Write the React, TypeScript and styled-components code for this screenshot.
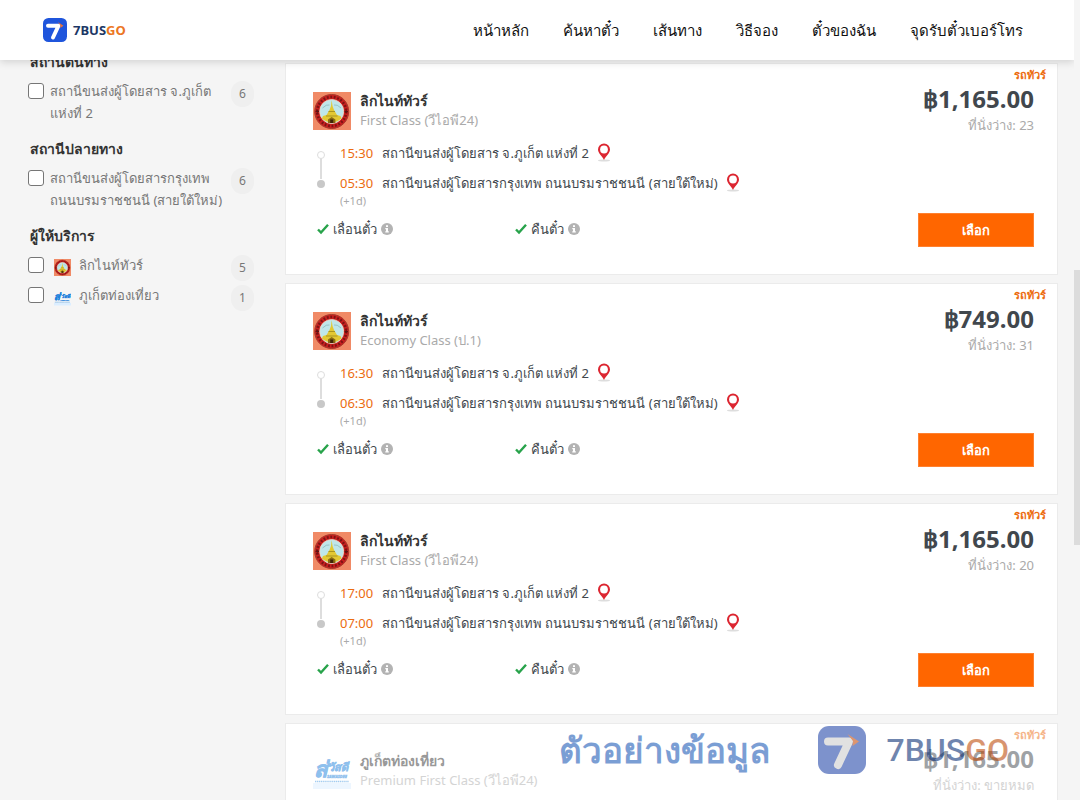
import React from "react";
import styled, { createGlobalStyle } from "styled-components";

const GlobalStyle = createGlobalStyle`
  * { box-sizing: border-box; }
  body {
    margin: 0;
    background: #f5f5f5;
    color: #41474d;
    font-family: "Noto Sans", "Liberation Sans", sans-serif;
    font-size: 13px;
  }
`;

const Page = styled.div`
  position: relative;
  height: 100vh;
  overflow: hidden;
`;

const Header = styled.header`
  position: relative;
  z-index: 2;
  display: flex;
  align-items: center;
  justify-content: space-between;
  height: 60px;
  margin-right: 6px;
  padding: 0 51px 0 43px;
  background: #fff;
  box-shadow: 0 2px 8px rgba(0, 0, 0, 0.15);
`;

const Brand = styled.a<{ $large?: boolean }>`
  display: flex;
  align-items: center;
  gap: ${(p) => (p.$large ? 20 : 6)}px;
  color: ${(p) => (p.$large ? "#002770" : "#1c3765")};
  font-family: ${(p) => (p.$large ? "Roboto" : '"Noto Sans"')}, sans-serif;
  font-size: ${(p) => (p.$large ? 32 : 13)}px;
  font-weight: ${(p) => (p.$large ? 500 : 700)};
  line-height: 1;
  text-decoration: none;
  svg {
    width: ${(p) => (p.$large ? 48 : 24)}px;
    height: ${(p) => (p.$large ? 48 : 24)}px;
  }
`;

const BrandAccent = styled.span<{ $large?: boolean }>`
  color: ${(p) => (p.$large ? "#bb4300" : "#ec7624")};
`;

const Nav = styled.nav`
  display: flex;
  gap: 34px;
`;

const NavLink = styled.a`
  color: #111;
  font-size: 15px;
  line-height: 24px;
  text-decoration: none;
  white-space: nowrap;
`;

const Body = styled.div`
  display: flex;
  align-items: flex-start;
  padding-right: 22px;
`;

const Sidebar = styled.aside`
  flex: 0 0 285px;
  padding: 0 28px;
  margin-top: -10px;
`;

const FilterGroup = styled.fieldset`
  margin: 0 0 13px;
  padding: 0;
  border: 0;
`;

const FilterTitle = styled.legend`
  margin-bottom: 6px;
  padding: 0 2px;
  color: #333;
  font-size: 14px;
  font-weight: 700;
  line-height: 24px;
`;

const FilterRow = styled.label`
  display: flex;
  align-items: flex-start;
  min-height: 30px;
  color: #777;
  line-height: 22px;
`;

const Checkbox = styled.input`
  appearance: none;
  flex: none;
  width: 16px;
  height: 16px;
  margin: 3px 6px 0 0;
  border: 1px solid #767676;
  border-radius: 3px;
  background: #fff;
`;

const FilterText = styled.span`
  flex: 1;
  white-space: nowrap;
`;

const SmallLogo = styled.span`
  flex: none;
  width: 17px;
  height: 17px;
  margin: 5px 8px 0 4px;
  svg { display: block; width: 17px; height: 17px; }
`;

const Count = styled.span`
  flex: none;
  width: 23px;
  height: 26px;
  margin: 1px 3px 0 0;
  border-radius: 12px;
  background: #efefef;
  font-size: 12px;
  line-height: 26px;
  text-align: center;
`;

const Results = styled.main`
  flex: 1;
  min-width: 0;
  display: flex;
  flex-direction: column;
  gap: 8px;
  padding-top: 3px;
`;

const Card = styled.article<{ $soldOut?: boolean }>`
  display: flex;
  justify-content: space-between;
  min-height: 212px;
  padding: 3px 11px 0 27px;
  border: 1px solid #ebebeb;
  background: #fff;
  > * { opacity: ${(p) => (p.$soldOut ? 0.5 : 1)}; }
`;

const Trip = styled.div`
  flex: 1;
  min-width: 0;
  padding-top: 25px;
`;

const Operator = styled.div`
  display: flex;
  gap: 9px;
  height: 38px;
  svg { flex: none; width: 38px; height: 38px; }
`;

const OperatorName = styled.h3`
  margin: 0;
  color: #333;
  font-size: 14px;
  font-weight: 700;
  line-height: 18px;
`;

const ServiceClass = styled.p`
  margin: 0;
  color: #aaa;
  line-height: 20px;
`;

const Stops = styled.div`
  display: flex;
  gap: 14px;
  margin-top: 12px;
`;

const Track = styled.svg`
  flex: none;
  width: 10px;
  height: 42px;
  margin: 7px 0 0 3px;
`;

const Stop = styled.div`
  display: flex;
  height: 30px;
  line-height: 22px;
  white-space: nowrap;
  svg { flex: none; margin: 1px 0 0 8px; }
`;

const Time = styled.time`
  flex: 0 0 42px;
  color: #ec6c10;
  font-size: 13px;
`;

const NextDay = styled.div`
  margin-top: -8px;
  color: #aaa;
  font-size: 11px;
  line-height: 14px;
`;

const Features = styled.div`
  display: flex;
  margin-top: 10px;
`;

const Feature = styled.div`
  display: flex;
  align-items: center;
  flex: 0 0 198px;
  gap: 4px;
  padding-left: 4px;
  line-height: 22px;
`;

const Fare = styled.div`
  display: flex;
  flex-direction: column;
  align-items: flex-end;
`;

const BusType = styled.div`
  height: 14px;
  color: #ec6c10;
  font-size: 11px;
  font-weight: 700;
  line-height: 16px;
`;

const Price = styled.div`
  margin-right: 12px;
  font-size: 24px;
  font-weight: 700;
  line-height: 36px;
`;

const Seats = styled.div`
  margin-right: 12px;
  color: #aaa;
  line-height: 16px;
`;

const SelectButton = styled.button`
  width: 116px;
  height: 34px;
  margin: 80px 12px 0 0;
  padding: 0;
  border: 1px solid #ff8130;
  background: #ff6600;
  color: #fff;
  font: 600 13px "Noto Sans", sans-serif;
  cursor: pointer;
`;

const Watermark = styled.div`
  position: absolute;
  z-index: 1;
  right: 71px;
  bottom: 26px;
  display: flex;
  align-items: center;
  gap: 48px;
  opacity: 0.56;
  pointer-events: none;
`;

const WatermarkText = styled.span`
  color: #1454b4;
  font-size: 35px;
  font-weight: 700;
  line-height: 48px;
  white-space: nowrap;
`;

const ScrollRail = styled.div`
  position: absolute;
  z-index: 3;
  inset: 0 0 0 auto;
  width: 6px;
  padding-top: 270px;
  background: #f5f5f5;
`;

const ScrollThumb = styled.div`
  height: 275px;
  background: #dcdcdc;
`;

const BrandMark = ({ muted }: { muted?: boolean }) => (
  <svg viewBox="0 0 48 48" aria-hidden="true">
    <rect width="48" height="48" rx="11" fill={muted ? "#193ea6" : "#1f55dc"} />
    <path d="M10 15.500H31L20 39" fill="none" stroke={muted ? "#cbcbcb" : "#fff"} strokeWidth="8" strokeLinecap="round" strokeLinejoin="round" />
    <path d="M29.500 8L41 15.500 34.500 20 35 15Z" fill={muted ? "#c44300" : "#ed7134"} />
  </svg>
);

const TempleLogo = () => (
  <svg viewBox="0 0 38 38" aria-hidden="true">
    <rect width="38" height="38" fill="#f08a66" />
    <circle cx="18.700" cy="19.500" r="17" fill="#c9201f" stroke="#a83a2c" />
    <circle cx="18.700" cy="19.500" r="14.500" fill="none" stroke="#7d1414" strokeWidth="2.600" strokeDasharray="1.800 1.700" />
    <circle cx="18.700" cy="19.500" r="12" fill="#bfe6ea" stroke="#efd9c4" strokeWidth=".8" />
    <path d="M9.500 16q4-4 7-3m4.500 0q3-1 7 3" fill="none" stroke="#8db9b9" strokeWidth=".8" />
    <path d="M18.700 8l.8 6 1.500 4 3 5 3.500 1 1 2.500q-9.800 8-19.600 0L10 24l3.500-1 3-5 1.500-4Z" fill="#e3c832" />
    <path d="M15.500 19.500h6.500M13 24h11.500" stroke="#a99521" />
    <path d="M15 31v-3.500l3.700-2.500 3.700 2.500V31Z" fill="#8a6c12" />
    <path d="M17.200 31v-3.500h3V31Z" fill="#3f2508" />
    <path d="M2.500 19.500h3.500m25.500 0H35M4.200 17.800v3.500m29-3.500v3.500" stroke="#5f1313" />
  </svg>
);

const SawasdeeLogo = () => (
  <svg viewBox="0 0 38 38" aria-hidden="true">
    <path d="M0 31H38V37H0Z" fill="#dceeff" />
    <g fill="#1f82dc" stroke="#1f82dc" fontFamily='"Noto Sans", sans-serif' fontStyle="italic" fontWeight="700">
      <text x="1" y="25" fontSize="22" strokeWidth=".6">ส่</text>
      <text x="15" y="19" fontSize="11" strokeWidth=".5">วัสดี</text>
      <text x="14" y="26" fontSize="4" strokeWidth=".4">SAWASDEE</text>
    </g>
    <path d="M2 29.500h34" stroke="#4a9be2" strokeWidth="1.600" strokeDasharray="1.300 .6" />
  </svg>
);

const Pin = () => (
  <svg width="14" height="19" viewBox="0 0 14 19" aria-hidden="true">
    <ellipse cx="7" cy="17.500" rx="6" ry="1" fill="#ddd" />
    <path d="M7 17C5.800 13.700 1 10.500 1 6.600a6 6 0 0 1 12 0C13 10.500 8.200 13.700 7 17Z" fill="#dc2631" />
    <circle cx="7" cy="6.500" r="3.900" fill="#fff" />
  </svg>
);

const Check = () => (
  <svg width="12" height="12" viewBox="0 0 12 12" aria-hidden="true">
    <path d="M1 6.500l3 3L11 1.800" fill="none" stroke="#28a34b" strokeWidth="2.400" />
  </svg>
);

const Info = () => (
  <svg width="12" height="12" viewBox="0 0 12 12" aria-hidden="true">
    <circle cx="6" cy="6" r="6" fill="#b3b3b3" />
    <path d="M5 2.300h2v1.700H5ZM4.300 5H7v3.200h.8v1.300H4.300V8.200H5V6.200h-.7Z" fill="#fff" />
  </svg>
);

const BrandName = ({ large }: { large?: boolean }) => (
  <Brand $large={large} as={large ? "div" : "a"} {...(large ? {} : { href: "#" })}>
    <BrandMark muted={large} />
    <span>7BUS<BrandAccent $large={large}>GO</BrandAccent></span>
  </Brand>
);

const navItems = ["หน้าหลัก", "ค้นหาตั๋ว", "เส้นทาง", "วิธีจอง", "ตั๋วของฉัน", "จุดรับตั๋วเบอร์โทร"];

type Option = { lines: string[]; count: number; logo?: React.ReactNode };
const filters: { title: string; options: Option[] }[] = [
  { title: "สถานีต้นทาง", options: [{ lines: ["สถานีขนส่งผู้โดยสาร จ.ภูเก็ต", "แห่งที่ 2"], count: 6 }] },
  { title: "สถานีปลายทาง", options: [{ lines: ["สถานีขนส่งผู้โดยสารกรุงเทพ", "ถนนบรมราชชนนี (สายใต้ใหม่)"], count: 6 }] },
  {
    title: "ผู้ให้บริการ",
    options: [
      { lines: ["ลิกไนท์ทัวร์"], count: 5, logo: <TempleLogo /> },
      { lines: ["ภูเก็ตท่องเที่ยว"], count: 1, logo: <SawasdeeLogo /> },
    ],
  },
];

const trips = [
  { name: "ลิกไนท์ทัวร์", cls: "First Class (วีไอพี24)", dep: "15:30", arr: "05:30", price: "฿1,165.00", seats: "23" },
  { name: "ลิกไนท์ทัวร์", cls: "Economy Class (ป.1)", dep: "16:30", arr: "06:30", price: "฿749.00", seats: "31" },
  { name: "ลิกไนท์ทัวร์", cls: "First Class (วีไอพี24)", dep: "17:00", arr: "07:00", price: "฿1,165.00", seats: "20" },
  { name: "ภูเก็ตท่องเที่ยว", cls: "Premium First Class (วีไอพี24)", price: "฿1,165.00", seats: "ขายหมด", soldOut: true },
];

export default function App() {
  return (
    <>
      <GlobalStyle />
      <Page>
        <Header>
          <BrandName />
          <Nav>
            {navItems.map((item) => <NavLink key={item} href="#">{item}</NavLink>)}
          </Nav>
        </Header>
        <Body>
          <Sidebar>
            {filters.map((group) => (
              <FilterGroup key={group.title}>
                <FilterTitle>{group.title}</FilterTitle>
                {group.options.map((option) => (
                  <FilterRow key={option.lines[0]}>
                    <Checkbox type="checkbox" />
                    {option.logo && <SmallLogo>{option.logo}</SmallLogo>}
                    <FilterText>
                      {option.lines.map((line) => <div key={line}>{line}</div>)}
                    </FilterText>
                    <Count>{option.count}</Count>
                  </FilterRow>
                ))}
              </FilterGroup>
            ))}
          </Sidebar>
          <Results>
            {trips.map((trip) => (
              <Card key={trip.dep ?? trip.name} $soldOut={trip.soldOut}>
                <Trip>
                  <Operator>
                    {trip.soldOut ? <SawasdeeLogo /> : <TempleLogo />}
                    <div>
                      <OperatorName>{trip.name}</OperatorName>
                      <ServiceClass>{trip.cls}</ServiceClass>
                    </div>
                  </Operator>
                  {trip.dep && (
                    <>
                      <Stops>
                        <Track viewBox="0 0 10 42" aria-hidden="true">
                          <path d="M5 9V30" stroke="#ddd" strokeWidth="2" />
                          <circle cx="5" cy="6" r="3.500" fill="#fff" stroke="#ddd" />
                          <circle cx="5" cy="35" r="4" fill="#c8c8c8" />
                        </Track>
                        <div>
                          <Stop><Time>{trip.dep}</Time><span>สถานีขนส่งผู้โดยสาร จ.ภูเก็ต แห่งที่ 2</span><Pin /></Stop>
                          <Stop><Time>{trip.arr}</Time><span>สถานีขนส่งผู้โดยสารกรุงเทพ ถนนบรมราชชนนี (สายใต้ใหม่)</span><Pin /></Stop>
                          <NextDay>(+1d)</NextDay>
                        </div>
                      </Stops>
                      <Features>
                        <Feature><Check />เลื่อนตั๋ว<Info /></Feature>
                        <Feature><Check />คืนตั๋ว<Info /></Feature>
                      </Features>
                    </>
                  )}
                </Trip>
                <Fare>
                  <BusType>รถทัวร์</BusType>
                  <Price>{trip.price}</Price>
                  <Seats>ที่นั่งว่าง: {trip.seats}</Seats>
                  {!trip.soldOut && <SelectButton type="button">เลือก</SelectButton>}
                </Fare>
              </Card>
            ))}
          </Results>
        </Body>
        <Watermark aria-hidden="true">
          <WatermarkText>ตัวอย่างข้อมูล</WatermarkText>
          <BrandName large />
        </Watermark>
        <ScrollRail><ScrollThumb /></ScrollRail>
      </Page>
    </>
  );
}
